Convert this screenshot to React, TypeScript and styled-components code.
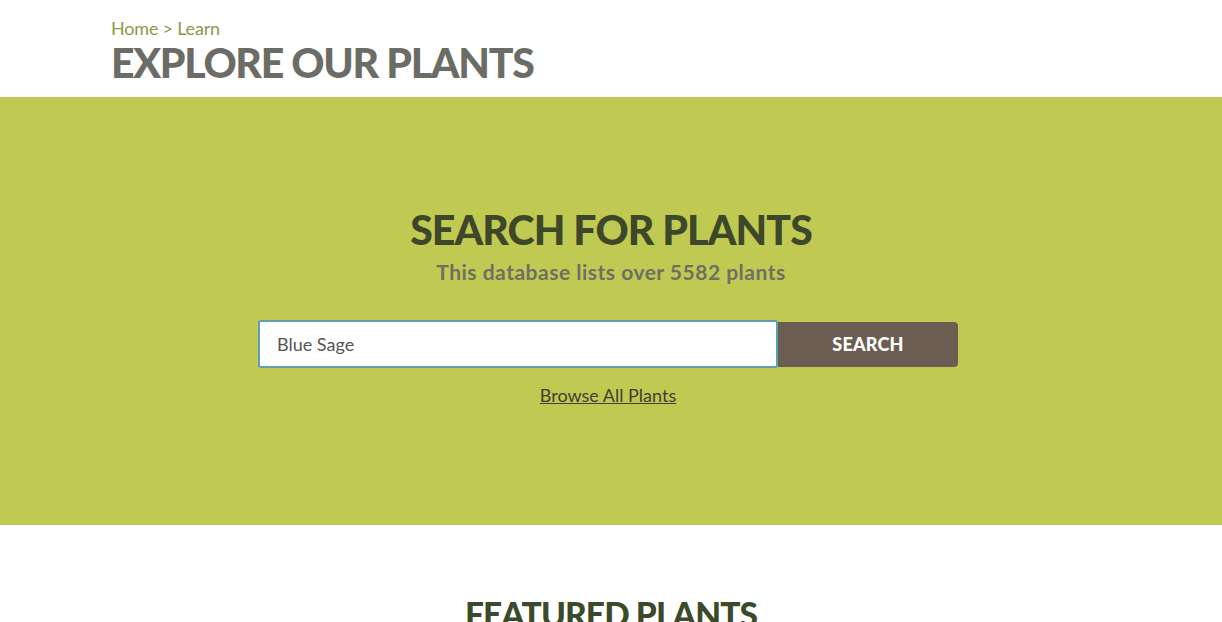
import React from "react"
import styled, { createGlobalStyle } from "styled-components"

const GlobalStyle = createGlobalStyle`
  body {
    margin: 0;
    font-family: Lato, "Liberation Sans", sans-serif;
    background: #ffffff;
  }
`

const Container = styled.div`
  width: 1000px;
  margin: 0 auto;
`

const PageHeader = styled.header`
  padding: 16px 0 11px;
`

const Breadcrumb = styled.div`
  font-size: 18px;
  color: #8a9a45;
  line-height: 24px;
  letter-spacing: -0.2px;
`

const PageTitle = styled.h1`
  margin: 0;
  font-size: 41px;
  line-height: 46px;
  font-weight: 900;
  color: #6c6c66;
  letter-spacing: -1.3px;
`

const SearchBand = styled.section`
  background: #c0c952;
  height: 428px;
  display: flex;
  flex-direction: column;
  align-items: center;
  padding-top: 110px;
  box-sizing: border-box;
`

const SectionTitle = styled.h2<{ $size?: number; $color?: string }>`
  margin: 0;
  font-size: ${({ $size }) => $size || 41}px;
  line-height: 46px;
  font-weight: 900;
  color: ${({ $color }) => $color || "#3d472a"};
  text-align: center;
  letter-spacing: -0.9px;
`

const Subtitle = styled.p`
  margin: 6px 0 0;
  font-size: 21px;
  font-weight: 700;
  color: #6f6f62;
  letter-spacing: 0.5px;
`

const SearchRow = styled.form`
  display: flex;
  align-items: center;
  margin: 36px 6px 0 0;
`

const SearchInput = styled.input`
  width: 520px;
  height: 48px;
  box-sizing: border-box;
  border: 2px solid #5f9db5;
  border-radius: 3px;
  padding: 0 17px;
  font-family: inherit;
  font-size: 18px;
  color: #555;
  background: #fff;
  outline: none;
`

const SearchButton = styled.button`
  width: 180px;
  height: 45px;
  border: none;
  border-radius: 0 4px 4px 0;
  background: #6b5d52;
  color: #fff;
  font-family: inherit;
  font-size: 18px;
  font-weight: 900;
  letter-spacing: 0.2px;
`

const BrowseLink = styled.a`
  margin: 16px 6px 0 0;
  font-size: 18px;
  color: #3f3f2e;
  text-decoration: underline;
`

const Featured = styled.section`
  padding-top: 66px;
  display: flex;
  justify-content: center;
`

export default function App() {
  return (
    <>
      <GlobalStyle />
      <PageHeader>
        <Container>
          <Breadcrumb>Home &gt; Learn</Breadcrumb>
          <PageTitle>EXPLORE OUR PLANTS</PageTitle>
        </Container>
      </PageHeader>
      <SearchBand>
        <SectionTitle>SEARCH FOR PLANTS</SectionTitle>
        <Subtitle>This database lists over 5582 plants</Subtitle>
        <SearchRow onSubmit={(e) => e.preventDefault()}>
          <SearchInput defaultValue="Blue Sage" />
          <SearchButton type="submit">SEARCH</SearchButton>
        </SearchRow>
        <BrowseLink href="#">Browse All Plants</BrowseLink>
      </SearchBand>
      <Featured>
        <SectionTitle $size={33.5} $color="#3c4a2c">FEATURED PLANTS</SectionTitle>
      </Featured>
    </>
  )
}
